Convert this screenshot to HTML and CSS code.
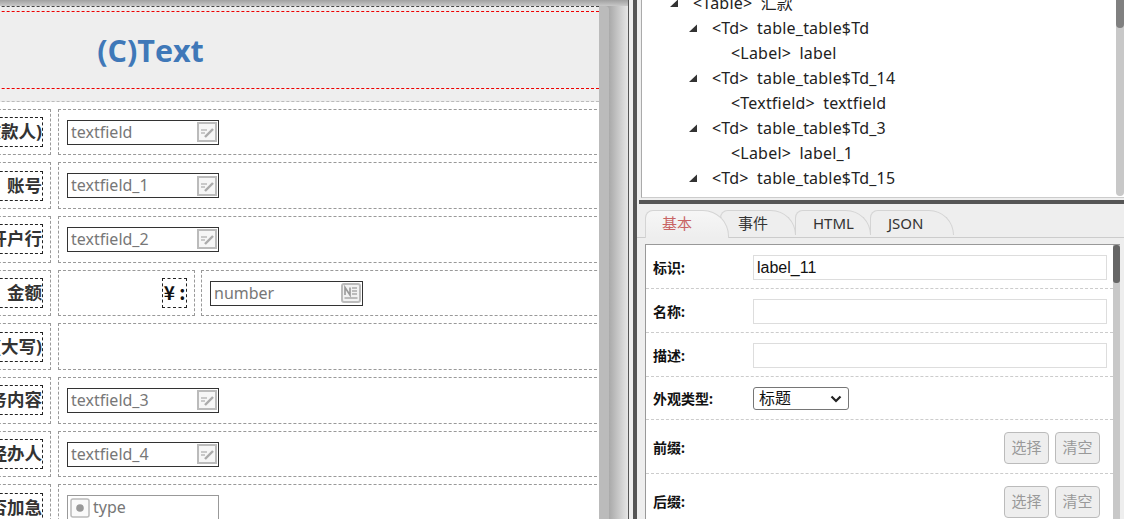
FILE: index.html
```html
<!DOCTYPE html>
<html lang="zh">
<head>
<meta charset="utf-8">
<title>Designer</title>
<link rel="stylesheet" href="styles.css">
</head>
<body>
<svg class="defs" width="0" height="0">
  <symbol id="i-text" viewBox="0 0 20 20">
    <rect x="1" y="1" width="18" height="18" fill="#f6f6f6" stroke="#bbb" stroke-width="2"/>
    <path d="M4 8h6M4 11h4" stroke="#bbb" stroke-width="1.5"/>
    <path d="M8 15l8-8" stroke="#aaa" stroke-width="2.4"/>
  </symbol>
  <symbol id="i-num" viewBox="0 0 20 20">
    <rect x="1" y="1" width="18" height="18" rx="2" fill="#f2f2f2" stroke="#bbb" stroke-width="2"/>
    <path d="M4 12V4.500L9 12V4.500" fill="none" stroke="#999" stroke-width="1.600"/>
    <path d="M11 5h5M11 8h5M11 11h5M3.500 15h13" stroke="#aaa" stroke-width="1.300"/>
  </symbol>
  <symbol id="i-radio" viewBox="0 0 20 20">
    <rect x="1" y="1" width="18" height="18" rx="2" fill="#fafafa" stroke="#bbb" stroke-width="1.500"/>
    <circle cx="10" cy="10" r="3.800" fill="#999"/>
  </symbol>
  <symbol id="i-tri" viewBox="0 0 8 8">
    <path d="M8 0.500V8H0z" fill="#333"/>
  </symbol>
</svg>

<main class="canvas">
  <div class="topbar"></div>
  <div class="sheet">
    <div class="page">
      <header class="head">
        <h1 class="title">(C)Text</h1>
      </header>
      <div class="rows">
        <div class="row">
          <div class="cell lab"><span class="lab-box">(收款人)</span></div>
          <div class="cell val"><div class="field"><span class="ph">textfield</span><svg class="ic"><use href="#i-text"/></svg></div></div>
        </div>
        <div class="row">
          <div class="cell lab"><span class="lab-box">账号</span></div>
          <div class="cell val"><div class="field"><span class="ph">textfield_1</span><svg class="ic"><use href="#i-text"/></svg></div></div>
        </div>
        <div class="row">
          <div class="cell lab"><span class="lab-box">开户行</span></div>
          <div class="cell val"><div class="field"><span class="ph">textfield_2</span><svg class="ic"><use href="#i-text"/></svg></div></div>
        </div>
        <div class="row">
          <div class="cell lab"><span class="lab-box">金额</span></div>
          <div class="cell yen"><span class="yen-box">¥ :</span></div>
          <div class="cell val"><div class="field"><span class="ph">number</span><svg class="ic"><use href="#i-num"/></svg></div></div>
        </div>
        <div class="row">
          <div class="cell lab"><span class="lab-box">(大写)</span></div>
          <div class="cell val"></div>
        </div>
        <div class="row">
          <div class="cell lab"><span class="lab-box">业务内容</span></div>
          <div class="cell val"><div class="field"><span class="ph">textfield_3</span><svg class="ic"><use href="#i-text"/></svg></div></div>
        </div>
        <div class="row">
          <div class="cell lab"><span class="lab-box">经办人</span></div>
          <div class="cell val"><div class="field"><span class="ph">textfield_4</span><svg class="ic"><use href="#i-text"/></svg></div></div>
        </div>
        <div class="row">
          <div class="cell lab"><span class="lab-box">是否加急</span></div>
          <div class="cell val"><div class="field field-type"><svg class="ic"><use href="#i-radio"/></svg><span class="ph">type</span></div></div>
        </div>
      </div>
    </div>
    <div class="sheet-bar"></div>
  </div>
</main>

<div class="split"></div>

<aside class="side">
  <div class="tree">
    <ul class="tree-list">
      <li class="node l0"><svg class="tri"><use href="#i-tri"/></svg>&lt;Table&gt; 汇款</li>
      <li class="node l1"><svg class="tri"><use href="#i-tri"/></svg>&lt;Td&gt; table_table$Td</li>
      <li class="node l2">&lt;Label&gt; label</li>
      <li class="node l1"><svg class="tri"><use href="#i-tri"/></svg>&lt;Td&gt; table_table$Td_14</li>
      <li class="node l2">&lt;Textfield&gt; textfield</li>
      <li class="node l1"><svg class="tri"><use href="#i-tri"/></svg>&lt;Td&gt; table_table$Td_3</li>
      <li class="node l2">&lt;Label&gt; label_1</li>
      <li class="node l1"><svg class="tri"><use href="#i-tri"/></svg>&lt;Td&gt; table_table$Td_15</li>
    </ul>
    <div class="tree-bar"><div class="tree-thumb"></div></div>
  </div>
  <div class="hsplit"></div>
  <nav class="tabs">
    <span class="tab tab-on">基本</span>
    <span class="tab tab-b">事件</span>
    <span class="tab tab-c">HTML</span>
    <span class="tab tab-d">JSON</span>
  </nav>
  <section class="form">
    <div class="form-body">
      <div class="frow">
        <label class="flabel">标识:</label>
        <input class="finput" type="text" value="label_11">
      </div>
      <div class="frow">
        <label class="flabel">名称:</label>
        <input class="finput" type="text">
      </div>
      <div class="frow">
        <label class="flabel">描述:</label>
        <input class="finput" type="text">
      </div>
      <div class="frow frow-sel">
        <label class="flabel">外观类型:</label>
        <div class="fselect"><span class="fselect-text">标题</span><svg class="chev" viewBox="0 0 12 8"><path d="M1.500 1.500L6 6l4.500-4.500" fill="none" stroke="#222" stroke-width="2.200"/></svg></div>
      </div>
      <div class="frow frow-btn">
        <label class="flabel">前缀:</label>
        <div class="btns"><button class="btn">选择</button><button class="btn">清空</button></div>
      </div>
      <div class="frow frow-btn">
        <label class="flabel">后缀:</label>
        <div class="btns"><button class="btn">选择</button><button class="btn">清空</button></div>
      </div>
    </div>
    <div class="form-bar"><div class="form-thumb"></div></div>
  </section>
</aside>
</body>
</html>
```

FILE: styles.css
```css
* { box-sizing: border-box; }
html, body { margin: 0; padding: 0; }
body {
  width: 1124px;
  height: 519px;
  overflow: hidden;
  display: flex;
  font-family: "Noto Sans", "Noto Sans CJK SC", sans-serif;
  color: #222;
  background: #eee;
}
.defs { position: absolute; }

/* canvas */
.canvas {
  width: 628px;
  height: 519px;
  flex: none;
  overflow: hidden;
  background: linear-gradient(90deg, #a9a9a9 0, #a9a9a9 609px, #e6e6e6 628px);
}
.topbar {
  height: 6px;
  background: linear-gradient(180deg, #a0a0a0, #c8c8c8);
}
.sheet {
  display: flex;
  width: 907px;
  margin-left: -298px;
  height: 513px;
}
.page {
  width: 897px;
  flex: none;
  overflow: hidden;
  background: #fff;
}
.head {
  height: 96px;
  border-top: 1px dashed #444;
  border-bottom: 1px dashed #bbb;
  background: #eee;
  padding-top: 4px;
}
.title {
  margin: 0;
  height: 78px;
  border-top: 1px dashed #e00;
  border-bottom: 1px dashed #e00;
  display: flex;
  align-items: center;
  justify-content: center;
  font-family: "Open Sans", sans-serif;
  font-size: 30.500px;
  font-weight: 700;
  color: #3f78b8;
}
.sheet-bar {
  width: 10px;
  flex: none;
  background: #bbb;
  border-top-right-radius: 4px;
}
.rows {
  display: grid;
  grid-auto-rows: 46.67px;
  gap: 7px;
  width: 920px;
  padding-top: 6.800px;
}
.row { display: flex; gap: 7px; min-width: 0; }
.cell {
  border: 1px dashed #999;
  display: flex;
  align-items: center;
  min-width: 0;
}
.lab {
  width: 349px;
  flex: none;
  padding-right: 7px;
}
.lab-box {
  flex: 1;
  height: 30px;
  border: 1px dashed #222;
  text-align: right;
  font-size: 17.500px;
  font-weight: 700;
  line-height: 27px;
  color: #333;
  white-space: nowrap;
}
.val { flex: 1; padding-left: 8px; }
.yen {
  width: 137px;
  flex: none;
  justify-content: flex-end;
  padding-right: 7px;
  margin-right: -1px;
}
.yen-box {
  width: 25px;
  height: 30px;
  border: 1px dashed #222;
  font-family: "Noto Sans CJK SC", sans-serif;
  font-size: 19px;
  font-weight: 700;
  line-height: 26px;
  text-align: center;
  color: #111;
  white-space: nowrap;
}
.field {
  width: 152px;
  height: 25px;
  border: 1px solid #333;
  display: flex;
  align-items: center;
  justify-content: space-between;
  padding: 0 1px 0 3px;
}
.yen + .val .field { width: 153px; }
.ph {
  font-size: 16px;
  color: #777;
  line-height: 23px;
}
.ic { width: 20px; height: 20px; flex: none; }
.field-type {
  border-color: #999;
  justify-content: flex-start;
  gap: 3px;
  padding-left: 2px;
}

/* divider */
.split {
  width: 9px;
  flex: none;
  background: #eee;
  border-left: 1px solid #555;
  border-right: 4px solid #555;
}

/* side */
.side {
  width: 487px;
  flex: none;
  background: #eee;
}
.tree {
  height: 198px;
  margin-left: 4px;
  display: flex;
  background: #fff;
  border-left: 1px solid #aaa;
  border-bottom: 1px solid #ccc;
  overflow: hidden;
}
.tree-list {
  flex: 1;
  list-style: none;
  margin: -9px 0 0;
  padding: 0;
  font-size: 16px;
  letter-spacing: .2px;
  word-spacing: 4px;
  color: #222;
}
.node {
  height: 25px;
  line-height: 25px;
  display: flex;
  align-items: center;
  white-space: pre;
}
.l0 { padding-left: 51px; }
.l1 { padding-left: 70px; }
.l2 { padding-left: 89px; }
.tri {
  width: 8px;
  height: 8px;
  flex: none;
  margin-left: -23px;
  margin-right: 15px;
  margin-top: -2px;
}
.tree-bar {
  width: 8px;
  flex: none;
  height: 196px;
  background: #c8c8c8;
  border-radius: 0 0 4px 4px;
}
.tree-thumb {
  height: 28px;
  background: #808080;
  border-radius: 0 0 4px 4px;
}
.hsplit {
  height: 4px;
  margin: 2px 0 0 2px;
  background: #555;
}
.tabs {
  display: flex;
  height: 34px;
  margin-left: 8px;
  padding-top: 6px;
  align-items: flex-start;
  position: relative;
}
.tabs::after {
  content: "";
  position: absolute;
  left: -8px;
  right: 0;
  top: 33px;
  height: 1px;
  background: #ccc;
}
.tab {
  height: 25px;
  padding-left: 17px;
  border: 1px solid #d4d4d4;
  border-bottom: 0;
  border-radius: 8px 26px 0 0;
  font-size: 15px;
  line-height: 25px;
  color: #333;
  background: #eee;
  margin-left: -1px;
}
.tab-on {
  width: 84px;
  height: 28px;
  padding-left: 16px;
  margin-left: 0;
  color: #c86464;
  background: linear-gradient(180deg, #f6f6f6, #eee);
  position: relative;
  z-index: 2;
}
.tab-b { width: 76px; margin-left: -9px; }
.tab-c { width: 76px; }
.tab-d { width: 84px; padding-left: 17px; }
.form {
  display: flex;
  width: 475px;
  height: 300px;
  margin: 6px 0 0 8px;
  border-top: 1px solid #999;
  border-left: 1px solid #999;
  background: #fff;
}
.form-body { flex: 1; min-width: 0; }
.form-bar {
  width: 7px;
  flex: none;
  background: #c8c8c8;
}
.form-thumb {
  height: 38px;
  background: #666;
  border-radius: 3px;
}
.frow {
  display: flex;
  align-items: center;
  justify-content: flex-start;
  height: 44px;
  padding: 10px 6px 8px 7px;
  border-bottom: 1px dashed #ccc;
}
.frow-sel { height: 43px; padding-top: 9px; }
.frow-btn {
  height: 54px;
  padding: 11px 13px 9px 7px;
}
.flabel {
  width: 100px;
  flex: none;
  font-size: 14px;
  font-weight: 700;
  line-height: 20px;
  margin-top: 0;
  color: #111;
}
.finput {
  flex: 1;
  min-width: 0;
  height: 25px;
  border: 1px solid #ddd;
  padding: 0 3px;
  font-family: "Liberation Sans", sans-serif;
  font-size: 16px;
  color: #111;
  background: #fff;
  outline: 0;
}
.fselect {
  width: 96px;
  height: 23px;
  border: 1px solid #767676;
  border-radius: 3px;
  display: flex;
  align-items: center;
  justify-content: space-between;
  padding: 0 6px 0 5px;
  font-size: 16px;
  color: #111;
}
.fselect-text { line-height: 18px; margin-top: -2px; }
.chev { width: 12px; height: 8px; }
.btns { display: flex; gap: 6px; margin-left: auto; }
.btn {
  width: 45px;
  height: 32px;
  padding: 0 0 2px;
  border: 1px solid #bbb;
  border-radius: 4px;
  background: #eee;
  font-family: "Noto Sans CJK SC", sans-serif;
  font-size: 15px;
  color: #999;
}
```
